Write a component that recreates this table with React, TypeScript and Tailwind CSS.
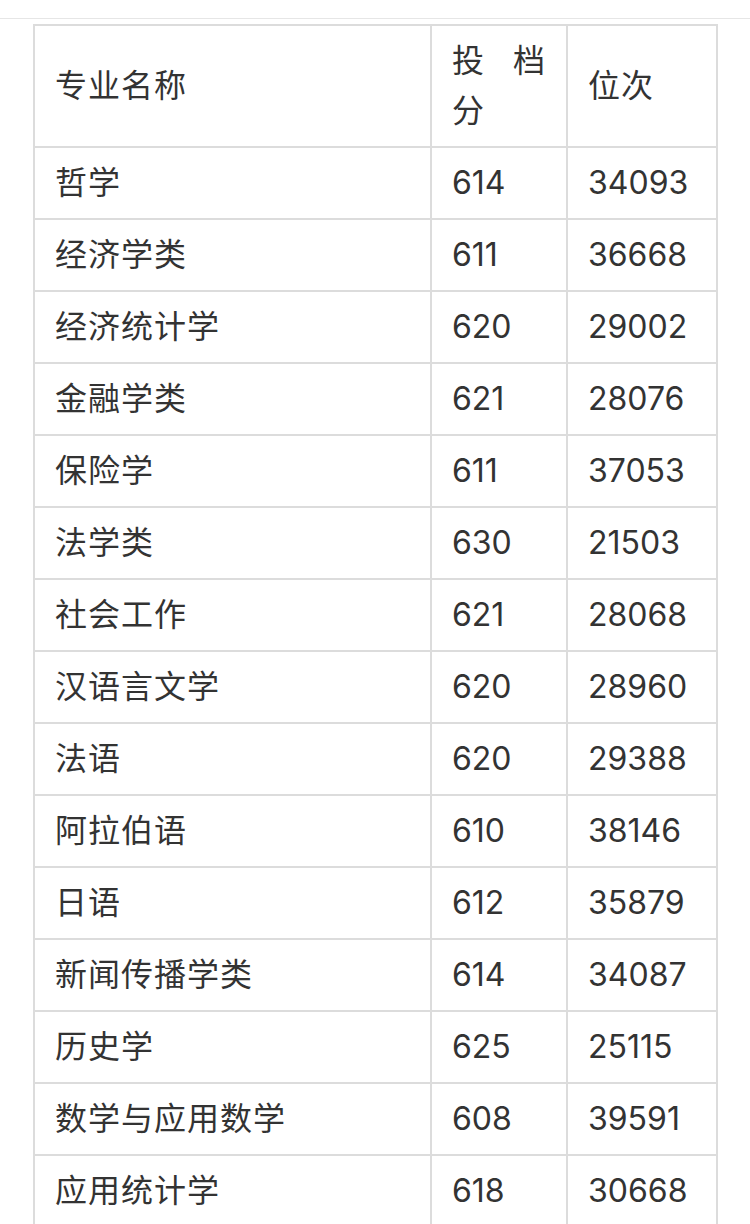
const rows: [string, string, string][] = [
  ['哲学', '614', '34093'],
  ['经济学类', '611', '36668'],
  ['经济统计学', '620', '29002'],
  ['金融学类', '621', '28076'],
  ['保险学', '611', '37053'],
  ['法学类', '630', '21503'],
  ['社会工作', '621', '28068'],
  ['汉语言文学', '620', '28960'],
  ['法语', '620', '29388'],
  ['阿拉伯语', '610', '38146'],
  ['日语', '612', '35879'],
  ['新闻传播学类', '614', '34087'],
  ['历史学', '625', '25115'],
  ['数学与应用数学', '608', '39591'],
  ['应用统计学', '618', '30668'],
]

const cell =
  'border-2 border-[#dcdcdc] px-[20px] py-[10px] text-justify align-middle font-normal'

export default function App() {
  return (
    <div
      className="min-h-screen bg-white text-[#333] text-[32px] leading-[50px]"
      style={{ fontFamily: '"Inter", "Noto Sans CJK SC", sans-serif' }}
    >
      <div className="h-[19px] border-b border-[#e6e6e6]" />
      <div className="pl-[33px] pt-[5px]">
        <table className="table-fixed border-collapse w-[683px]">
          <colgroup>
            <col className="w-[397px]" />
            <col className="w-[136px]" />
            <col className="w-[150px]" />
          </colgroup>
          <thead>
            <tr>
              <th className={`${cell} text-left tracking-[1px]`}>专业名称</th>
              <th className={`${cell} text-justify tracking-[1px]`}>投档分</th>
              <th className={`${cell} text-left tracking-[1px]`}>位次</th>
            </tr>
          </thead>
          <tbody>
            {rows.map(([name, score, rank]) => (
              <tr key={name}>
                <td className={`${cell} tracking-[1px]`}>{name}</td>
                <td className={cell}>{score}</td>
                <td className={cell}>{rank}</td>
              </tr>
            ))}
          </tbody>
        </table>
      </div>
    </div>
  )
}
